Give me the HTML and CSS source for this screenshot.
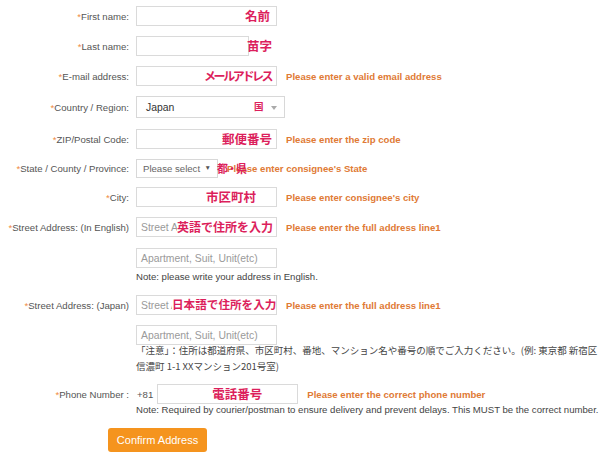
FILE: index.html
```html
<!DOCTYPE html>
<html lang="ja">
<head>
<meta charset="utf-8">
<title>Address</title>
<link rel="stylesheet" href="styles.css">
</head>
<body>
<form class="form">
  <div class="row">
    <label class="lbl"><span class="req">*</span>First name:</label>
    <div class="field"><div class="input"></div><span class="jp jp-first">名前</span></div>
  </div>
  <div class="row">
    <label class="lbl"><span class="req">*</span>Last name:</label>
    <div class="field"><div class="input short"></div><span class="jp jp-last">苗字</span></div>
  </div>
  <div class="row">
    <label class="lbl"><span class="req">*</span>E-mail address:</label>
    <div class="field"><div class="input"></div><span class="jp jp-mail">メールアドレス</span></div>
    <span class="err">Please enter a valid email address</span>
  </div>
  <div class="row">
    <label class="lbl"><span class="req">*</span>Country / Region:</label>
    <div class="field"><div class="select country">Japan<span class="tri"></span></div><span class="jp jp-country">国</span></div>
  </div>
  <div class="row gap11">
    <label class="lbl"><span class="req">*</span>ZIP/Postal Code:</label>
    <div class="field"><div class="input"></div><span class="jp jp-zip">郵便番号</span></div>
    <span class="err">Please enter the zip code</span>
  </div>
  <div class="row">
    <label class="lbl"><span class="req">*</span>State / County / Province:</label>
    <div class="field"><div class="select state">Please select<span class="caret">▼</span></div><span class="jp jp-state">都・県</span></div>
    <span class="err">Please enter consignee's State</span>
  </div>
  <div class="row gap9">
    <label class="lbl"><span class="req">*</span>City:</label>
    <div class="field"><div class="input"></div><span class="jp jp-city">市区町村</span></div>
    <span class="err">Please enter consignee's city</span>
  </div>
  <div class="row">
    <label class="lbl"><span class="req">*</span>Street Address: (In English)</label>
    <div class="field"><div class="input">Street Address</div><span class="jp jp-en">英語で住所を入力</span></div>
    <span class="err">Please enter the full address line1</span>
  </div>
  <div class="row gap11">
    <span class="lbl"></span>
    <div class="field"><div class="input">Apartment, Suit, Unit(etc)</div></div>
  </div>
  <div class="row gap3">
    <span class="lbl"></span>
    <p class="note">Note: please write your address in English.</p>
  </div>
  <div class="row gap12">
    <label class="lbl"><span class="req">*</span>Street Address: (Japan)</label>
    <div class="field"><div class="input">Street Address</div><span class="jp jp-ja">日本語で住所を入力</span></div>
    <span class="err">Please enter the full address line1</span>
  </div>
  <div class="row">
    <span class="lbl"></span>
    <div class="field"><div class="input">Apartment, Suit, Unit(etc)</div></div>
  </div>
  <div class="row pull3">
    <span class="lbl"></span>
    <p class="notice">「注意」：住所は都道府県、市区町村、番地、マンション名や番号の順でご入力ください。(例: 東京都 新宿区<br>信濃町 1-1 XXマンション201号室)</p>
  </div>
  <div class="row">
    <label class="lbl"><span class="req">*</span>Phone Number :</label>
    <span class="prefix">+81</span>
    <div class="field"><div class="input"></div><span class="jp jp-tel">電話番号</span></div>
    <span class="err">Please enter the correct phone number</span>
  </div>
  <div class="row gap0">
    <span class="lbl"></span>
    <p class="note">Note: Required by courier/postman to ensure delivery and prevent delays. This MUST be the correct number.</p>
  </div>
  <div class="row gap12">
    <button type="button" class="btn">Confirm Address</button>
  </div>
</form>
</body>
</html>
```

FILE: styles.css
```css
* {
  box-sizing: border-box;
  margin: 0;
  padding: 0;
}

body {
  background: #fff;
  font-family: Arial, "Liberation Sans", "Noto Sans CJK JP", sans-serif;
  font-size: 9.6px;
  color: #555;
  overflow: hidden;
}

.form {
  display: flex;
  flex-direction: column;
  padding-top: 6px;
  width: 608px;
}

.row {
  display: flex;
  align-items: center;
  margin-top: 10px;
}

.row:first-child { margin-top: 0; }
.row.gap0 { margin-top: 0; }
.row.gap3 { margin-top: 3px; }
.row.gap9 { margin-top: 9px; }
.row.gap11 { margin-top: 11px; }
.row.gap12 { margin-top: 12px; }
.row.pull3 { margin-top: -3px; }

.lbl {
  width: 136px;
  flex: none;
  text-align: right;
  padding-right: 7px;
  white-space: nowrap;
  color: #555;
}

.req { color: #ef8a3e; }

.field {
  position: relative;
  flex: none;
}

.input {
  width: 141px;
  height: 20px;
  border: 1px solid #dadada;
  background: #fff;
  font-size: 10.4px;
  color: #9a9a9a;
  padding-left: 4px;
  display: flex;
  align-items: center;
  white-space: nowrap;
  overflow: hidden;
}

.input.short { width: 113px; }

.select {
  position: relative;
  border: 1px solid #d8d8d8;
  background: #fff;
  display: flex;
  align-items: center;
  white-space: nowrap;
}

.select.country {
  width: 149px;
  height: 22px;
  padding-left: 9px;
  font-size: 10.4px;
  color: #333;
}

.tri {
  position: absolute;
  right: 7px;
  top: 9px;
  width: 0;
  height: 0;
  border-left: 3px solid transparent;
  border-right: 3px solid transparent;
  border-top: 4px solid #aaa;
}

.select.state {
  width: 82px;
  height: 19px;
  padding-left: 6px;
  font-size: 9.6px;
  color: #666;
}

.caret {
  position: absolute;
  right: 6px;
  top: 4px;
  font-size: 6.5px;
  color: #555;
}

.jp {
  position: absolute;
  top: 0;
  bottom: 0;
  display: flex;
  align-items: center;
  font-family: "Noto Sans CJK JP", sans-serif;
  font-weight: bold;
  font-size: 12.5px;
  line-height: 1;
  color: #dc1f5c;
  white-space: nowrap;
}

.jp-first { left: 109px; }
.jp-last { left: 111px; }
.jp-mail { left: 68px; font-size: 12px; letter-spacing: -2.4px; }
.jp-country { left: 118px; font-size: 9.5px; }
.jp-zip { left: 86px; }
.jp-state { left: 81px; font-size: 11px; letter-spacing: -1.5px; }
.jp-city { left: 70px; }
.jp-en { left: 41px; top: 1px; bottom: 1px; font-size: 12px; background: #fff; padding-right: 1px; }
.jp-ja { left: 36px; top: 1px; bottom: 1px; font-size: 11.6px; background: #fff; }
.jp-tel { left: 55px; }

.err {
  margin-left: 9px;
  color: #e07a35;
  font-weight: bold;
  white-space: nowrap;
}

.prefix {
  color: #555;
  margin-left: 1px;
  margin-right: 4px;
}

.note {
  color: #444;
  line-height: 12px;
  white-space: nowrap;
}

.notice {
  color: #444;
  font-family: "Noto Sans CJK JP", sans-serif;
  font-size: 9.5px;
  line-height: 16px;
  white-space: nowrap;
}

.btn {
  margin-left: 108px;
  width: 99px;
  height: 24px;
  border: none;
  border-radius: 3px;
  background: #f5941e;
  color: #fff;
  font-family: Arial, "Liberation Sans", sans-serif;
  font-size: 11px;
}
```
